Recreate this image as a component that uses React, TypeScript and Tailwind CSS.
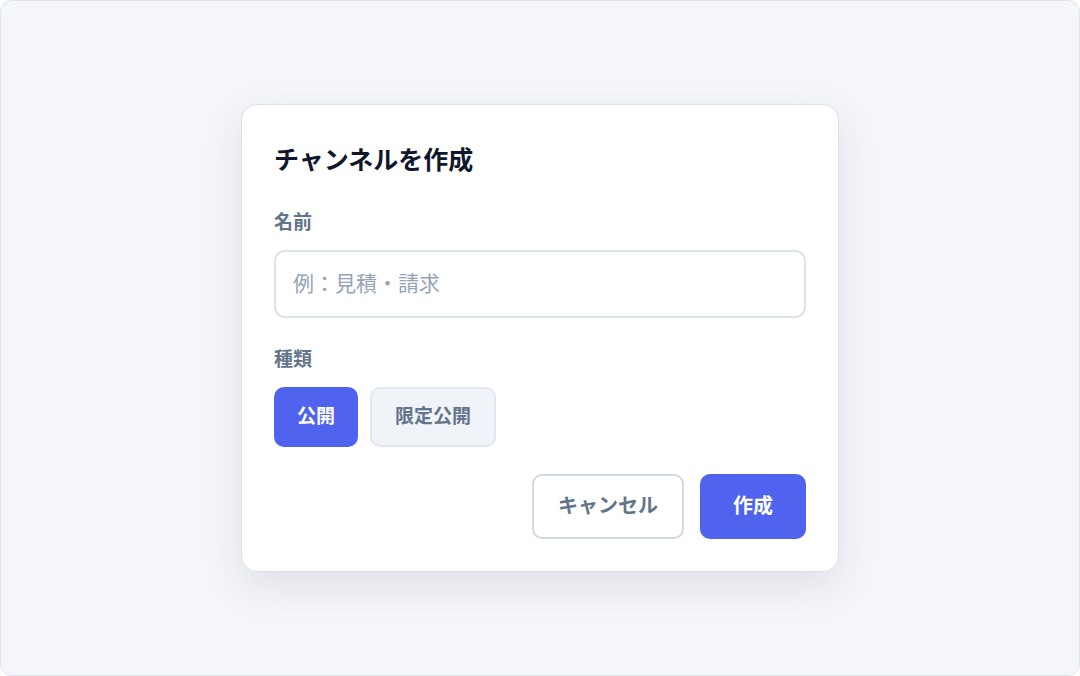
export default function App() {
  const font = { fontFamily: '"Noto Sans CJK JP", "Noto Sans", sans-serif' };
  return (
    <div
      className="w-[1080px] h-[676px] flex items-center justify-center bg-[#f5f6fa] border border-[#dfe4ec] rounded-[12px]"
      style={font}
    >
      <div className="w-[598px] bg-white border border-[#d9e1ec] rounded-[16px] shadow-[0_14px_40px_rgba(30,41,59,0.10)] px-8 pt-[37px] pb-8">
        <h1 className="text-[25px] leading-[32px] font-bold text-[#0f172a]">チャンネルを作成</h1>

        <label className="block mt-[35px] text-[19px] leading-[24px] font-bold text-[#64748b]">名前</label>
        <input
          placeholder="例：見積・請求"
          className="mt-[17px] w-full h-[68px] rounded-[11px] border-2 border-[#dbe3ec] px-[17px] pb-[4px] text-[21px] text-[#0f172a] placeholder:text-[#94a3b8] outline-none"
        />

        <div className="mt-[28px] text-[19px] leading-[24px] font-bold text-[#64748b]">種類</div>
        <div className="mt-[17px] flex gap-3">
          <button className="h-[60px] px-[23px] pb-[4px] rounded-[10px] bg-[#4f63ee] text-white text-[19px] font-bold">公開</button>
          <button className="h-[60px] px-[23px] pb-[4px] rounded-[10px] bg-[#f0f3f8] border-2 border-[#e2e7ef] text-[#64748b] text-[19px] font-bold">
            限定公開
          </button>
        </div>

        <div className="mt-[27px] flex justify-end gap-4">
          <button className="h-[65px] px-6 pb-[4px] rounded-[10px] bg-white border-2 border-[#cfd8e4] text-[#64748b] text-[20px] font-bold">
            キャンセル
          </button>
          <button className="h-[65px] px-[33px] pb-[4px] rounded-[10px] bg-[#4f63ee] text-white text-[20px] font-bold">作成</button>
        </div>
      </div>
    </div>
  );
}
